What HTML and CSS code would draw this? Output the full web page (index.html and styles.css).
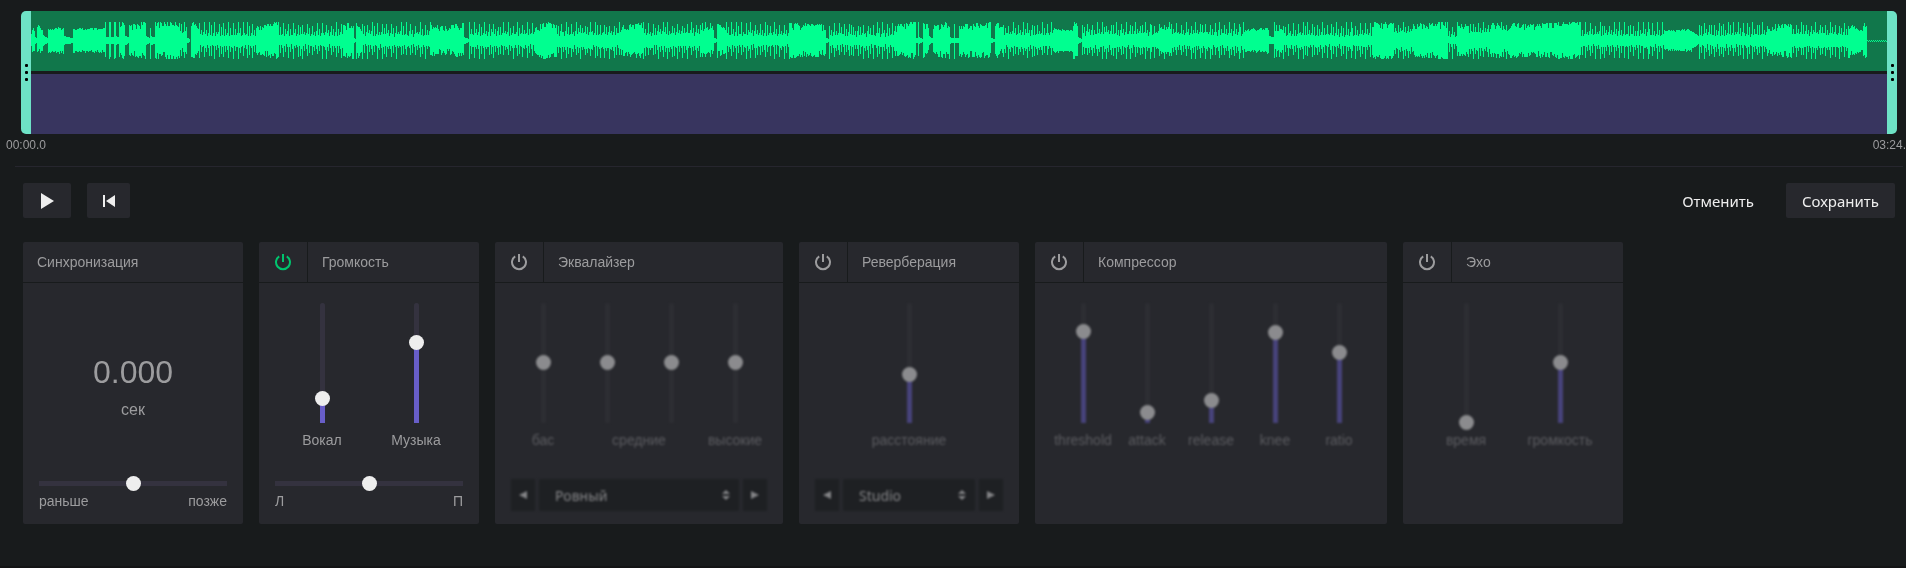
FILE: index.html
```html
<!DOCTYPE html>
<html lang="ru">
<head>
    <meta charset="UTF-8">
    <meta name="viewport" content="width=device-width, initial-scale=1.0">
    <title>Редактор записи</title>
    <link rel="stylesheet" href="styles.css">
</head>
<body>
    <svg class="sprite" aria-hidden="true">
        <symbol id="icon-power" viewBox="0 0 18 18">
            <path d="M5.2 3.3A7 7 0 1 0 12.8 3.3" fill="none" stroke="currentColor" stroke-width="2"/>
            <path d="M9 1V9" fill="none" stroke="currentColor" stroke-width="2"/>
        </symbol>
        <symbol id="icon-prev" viewBox="0 0 8 8">
            <path d="M8 0V8L0 4Z" fill="currentColor"/>
        </symbol>
        <symbol id="icon-next" viewBox="0 0 8 8">
            <path d="M0 0V8L8 4Z" fill="currentColor"/>
        </symbol>
        <symbol id="icon-sort" viewBox="0 0 8 10">
            <path d="M4 0L8 4H0ZM4 10L0 6H8Z" fill="currentColor"/>
        </symbol>
    </svg>

    <main class="editor">
        <div class="timeline">
            <button class="handle handle-start" aria-label="Начало"><i></i><i></i><i></i></button>
            <div class="tracks">
                <canvas class="track track-voice" id="wave" width="1856" height="60"></canvas>
                <div class="track track-music"></div>
            </div>
            <button class="handle handle-end" aria-label="Конец"><i></i><i></i><i></i></button>
        </div>
        <div class="times">
            <span>00:00.0</span>
            <span>03:24.</span>
        </div>

        <div class="toolbar">
            <button class="btn btn-play" aria-label="Играть">
                <svg width="14" height="16" viewBox="0 0 14 16"><path d="M1 0L14 8L1 16Z" fill="currentColor"/></svg>
            </button>
            <button class="btn btn-rewind" aria-label="В начало">
                <svg width="12" height="12" viewBox="0 0 12 12"><path d="M0 0H2V12H0ZM12 0V12L3 6Z" fill="currentColor"/></svg>
            </button>
            <button class="btn btn-text btn-flat">Отменить</button>
            <button class="btn btn-text">Сохранить</button>
        </div>

        <div class="panels">
            <section class="panel">
                <header class="panel-head"><h2>Синхронизация</h2></header>
                <div class="panel-body">
                    <div class="sync">
                        <output class="sync-value" for="sync">0.000</output>
                        <span class="sync-unit">сек</span>
                    </div>
                    <div class="balance">
                        <input type="range" id="sync" aria-label="Синхронизация" min="-50" max="50" value="0">
                        <span>раньше</span>
                        <span>позже</span>
                    </div>
                </div>
            </section>

            <section class="panel">
                <header class="panel-head">
                    <button class="power power-on" aria-label="Громкость вкл."><svg><use href="#icon-power"/></svg></button>
                    <h2>Громкость</h2>
                </header>
                <div class="panel-body">
                    <div class="faders">
                        <div class="fader">
                            <div class="slot" style="--level: 20%"><input type="range" id="vocal" value="20"></div>
                            <label for="vocal">Вокал</label>
                        </div>
                        <div class="fader">
                            <div class="slot" style="--level: 67%"><input type="range" id="music" value="67"></div>
                            <label for="music">Музыка</label>
                        </div>
                    </div>
                    <div class="balance">
                        <input type="range" aria-label="Баланс" min="-50" max="50" value="0">
                        <span>Л</span>
                        <span>П</span>
                    </div>
                </div>
            </section>

            <section class="panel panel-off panel-4">
                <header class="panel-head">
                    <button class="power" aria-label="Эквалайзер вкл."><svg><use href="#icon-power"/></svg></button>
                    <h2>Эквалайзер</h2>
                </header>
                <div class="panel-body">
                    <div class="faders">
                        <div class="fader">
                            <div class="slot"><input type="range" id="bass" value="50"></div>
                            <label for="bass">бас</label>
                        </div>
                        <div class="fader fader-pair">
                            <div class="slot"><input type="range" id="mid" value="50"></div>
                            <div class="slot"><input type="range" aria-label="средние 2" value="50"></div>
                            <label for="mid">средние</label>
                        </div>
                        <div class="fader">
                            <div class="slot"><input type="range" id="treble" value="50"></div>
                            <label for="treble">высокие</label>
                        </div>
                    </div>
                    <div class="presets">
                        <button aria-label="Назад"><svg width="8" height="8"><use href="#icon-prev"/></svg></button>
                        <div class="preset">
                            <select aria-label="Пресет эквалайзера"><option>Ровный</option></select>
                            <svg width="8" height="10"><use href="#icon-sort"/></svg>
                        </div>
                        <button aria-label="Вперёд"><svg width="8" height="8"><use href="#icon-next"/></svg></button>
                    </div>
                </div>
            </section>

            <section class="panel panel-off">
                <header class="panel-head">
                    <button class="power" aria-label="Реверберация вкл."><svg><use href="#icon-power"/></svg></button>
                    <h2>Реверберация</h2>
                </header>
                <div class="panel-body">
                    <div class="faders">
                        <div class="fader">
                            <div class="slot" style="--level: 40%"><input type="range" id="distance" value="40"></div>
                            <label for="distance">расстояние</label>
                        </div>
                    </div>
                    <div class="presets">
                        <button aria-label="Назад"><svg width="8" height="8"><use href="#icon-prev"/></svg></button>
                        <div class="preset">
                            <select aria-label="Пресет реверберации"><option>Studio</option></select>
                            <svg width="8" height="10"><use href="#icon-sort"/></svg>
                        </div>
                        <button aria-label="Вперёд"><svg width="8" height="8"><use href="#icon-next"/></svg></button>
                    </div>
                </div>
            </section>

            <section class="panel panel-off panel-5">
                <header class="panel-head">
                    <button class="power" aria-label="Компрессор вкл."><svg><use href="#icon-power"/></svg></button>
                    <h2>Компрессор</h2>
                </header>
                <div class="panel-body">
                    <div class="faders">
                        <div class="fader">
                            <div class="slot" style="--level: 76%"><input type="range" id="threshold" value="76"></div>
                            <label for="threshold">threshold</label>
                        </div>
                        <div class="fader">
                            <div class="slot" style="--level: 8%"><input type="range" id="attack" value="8"></div>
                            <label for="attack">attack</label>
                        </div>
                        <div class="fader">
                            <div class="slot" style="--level: 18%"><input type="range" id="release" value="18"></div>
                            <label for="release">release</label>
                        </div>
                        <div class="fader">
                            <div class="slot" style="--level: 75%"><input type="range" id="knee" value="75"></div>
                            <label for="knee">knee</label>
                        </div>
                        <div class="fader">
                            <div class="slot" style="--level: 58%"><input type="range" id="ratio" value="58"></div>
                            <label for="ratio">ratio</label>
                        </div>
                    </div>
                </div>
            </section>

            <section class="panel panel-off">
                <header class="panel-head">
                    <button class="power" aria-label="Эхо вкл."><svg><use href="#icon-power"/></svg></button>
                    <h2>Эхо</h2>
                </header>
                <div class="panel-body">
                    <div class="faders">
                        <div class="fader">
                            <div class="slot" style="--level: 0%"><input type="range" id="echo-time" value="0"></div>
                            <label for="echo-time">время</label>
                        </div>
                        <div class="fader">
                            <div class="slot" style="--level: 50%"><input type="range" id="echo-volume" value="50"></div>
                            <label for="echo-volume">громкость</label>
                        </div>
                    </div>
                </div>
            </section>
        </div>
    </main>

    <script src="wave.js"></script>
</body>
</html>
```
FILE: styles.css
```css
* {
    box-sizing: border-box;
}
body {
    margin: 0;
    min-height: 100vh;
    background-color: #181b1c;
    border-bottom: 2px solid #131415;
    color: #9c9c9e;
    font-family: "Liberation Sans", Arial, sans-serif;
    font-size: 14px;
    line-height: 20px;
    overflow: hidden;
}
button {
    display: flex;
    align-items: center;
    justify-content: center;
    padding: 0;
    border: none;
    background: none;
    color: inherit;
    cursor: pointer;
}
.sprite {
    display: none;
}
.editor {
    padding-top: 11px;
}

/* timeline */
.timeline {
    display: flex;
    margin: 0 9px 0 21px;
}
.handle {
    flex: none;
    flex-direction: column;
    gap: 4px;
    width: 10px;
    background-color: #6ee2c6;
    cursor: ew-resize;
}
.handle i {
    width: 3px;
    height: 3px;
    border-radius: 1px;
    background-color: #000;
}
.handle-start {
    border-radius: 5px 0 0 5px;
}
.handle-end {
    border-radius: 0 5px 5px 0;
}
.tracks {
    flex: 1;
    min-width: 0;
    display: flex;
    flex-direction: column;
    gap: 3px;
}
.track {
    display: block;
    width: 100%;
    height: 60px;
}
.track-voice {
    background-color: #11774b;
}
.track-music {
    background-color: #38355f;
}
.times {
    display: flex;
    justify-content: space-between;
    padding: 1px 0 0 6px;
    font-size: 12px;
}

/* toolbar */
.toolbar {
    display: flex;
    gap: 16px;
    margin: 11px 3px 0 15px;
    padding: 16px 8px 24px;
    border-top: 1px solid #26262e;
}
.btn {
    height: 35px;
    border-radius: 2px;
    background-color: #27282d;
    color: #eee;
}
.btn-play {
    width: 48px;
}
.btn-rewind {
    width: 43px;
}
.btn-text {
    padding: 0 16px;
    font-family: "Noto Sans", sans-serif;
    font-size: 15px;
}
.btn-flat {
    margin-left: auto;
    background: none;
}

/* effect panels */
.panels {
    display: flex;
    gap: 16px;
    padding: 0 23px;
}
.panel {
    display: flex;
    flex-direction: column;
    width: 220px;
    border-radius: 2px;
    background-color: #27282d;
}
.panel-4 {
    width: 288px;
}
.panel-5 {
    width: 352px;
}
.panel-head {
    display: flex;
    height: 41px;
    border-bottom: 1px solid #181b1c;
}
.panel-head h2 {
    margin: 0;
    padding: 10px 14px;
    font-size: 14px;
    font-weight: normal;
}
.power {
    width: 49px;
    border-right: 1px solid #181b1c;
}
.power svg {
    width: 18px;
    height: 18px;
}
.power-on {
    color: #00c46e;
}
.panel-body {
    flex: 1;
    display: flex;
    flex-direction: column;
    justify-content: space-between;
    min-height: 241px;
    padding: 12px 16px 13px;
}
.panel-off .panel-body {
    filter: blur(1px);
    opacity: 0.5;
}

.sync {
    display: flex;
    flex-direction: column;
    align-items: center;
    gap: 8px;
    padding-top: 57px;
}
.sync-value {
    font-size: 32px;
    line-height: 40px;
}
.sync-unit {
    font-size: 16px;
}

/* sliders */
input[type="range"] {
    appearance: none;
    width: 100%;
    height: 15px;
    margin: 0;
    background: none;
    cursor: pointer;
}
input[type="range"]::-webkit-slider-thumb {
    appearance: none;
    width: 15px;
    height: 15px;
    border-radius: 50%;
    background-color: #eee;
}
.balance {
    display: flex;
    flex-wrap: wrap;
    justify-content: space-between;
}
.balance input {
    background: linear-gradient(#34323f, #34323f) center / 100% 5px no-repeat;
}
.faders {
    display: flex;
}
.fader {
    flex: 1;
    display: grid;
    justify-items: center;
}
.fader-pair {
    flex: 2;
    grid-template-columns: 1fr 1fr;
}
.fader-pair label {
    grid-column: 1 / -1;
}
.slot {
    --level: 0%;
    --rail: #34323f;
    display: grid;
    place-items: center;
}
.slot::before {
    content: "";
    grid-area: 1 / 1;
    width: 5px;
    height: 120px;
    border-radius: 3px 3px 0 0;
    background: linear-gradient(to top, #685ec8 var(--level), var(--rail) var(--level));
}
.slot input {
    grid-area: 1 / 1;
    width: 15px;
    height: 135px;
    writing-mode: vertical-lr;
    direction: rtl;
}
.panel-off .slot {
    --rail: #333439;
}
.panel-off label {
    color: #8e8e92;
}

/* presets */
.presets {
    display: flex;
    gap: 4px;
}
.presets button {
    width: 24px;
    height: 32px;
    background-color: #16191a;
    color: #ddd;
}
.preset {
    flex: 1;
    display: grid;
    align-items: center;
}
.preset select {
    grid-area: 1 / 1;
    appearance: none;
    width: 100%;
    height: 32px;
    padding: 0 16px;
    border: none;
    border-radius: 2px;
    background-color: #16191a;
    color: #ddd;
    font-family: "Noto Sans", sans-serif;
    font-size: 14px;
}
.preset svg {
    grid-area: 1 / 1;
    justify-self: end;
    margin-right: 9px;
    color: #ddd;
    pointer-events: none;
}
```
FILE: wave.js
```js
// [start, end, kind, from, to]
// solid: filled block, amplitude goes from -> to
// beat:  separate hits over a low floor
const segments = [
    [0, 1, 'solid', 5, 5], [1, 4, 'solid', 12, 8], [4, 6, 'solid', 2, 1],
    [6, 12, 'solid', 15, 10], [12, 17, 'solid', 4, 1], [17, 33, 'solid', 11, 12],
    [33, 42, 'solid', 3, 1], [42, 74, 'solid', 11, 11], [74, 75, 'solid', 18, 18],
    [75, 78, 'solid', 2, 2], [78, 80, 'solid', 18, 18], [80, 83, 'solid', 2, 2],
    [83, 85, 'solid', 18, 16], [85, 88, 'solid', 3, 2], [88, 94, 'solid', 18, 18],
    [94, 98, 'solid', 4, 1], [98, 115, 'solid', 14, 18], [115, 119, 'solid', 3, 1],
    [119, 120, 'solid', 18, 18], [120, 124, 'solid', 3, 2], [124, 148, 'solid', 17, 18],
    [148, 156, 'beat', 9, 18], [156, 159, 'solid', 1, 0], [160, 168, 'solid', 19, 11],
    [168, 225, 'beat', 5, 18], [225, 247, 'solid', 13, 18], [247, 312, 'beat', 5, 18],
    [312, 323, 'solid', 15, 18], [323, 325, 'solid', 1, 0], [325, 331, 'solid', 17, 13],
    [331, 400, 'beat', 5, 18], [400, 420, 'solid', 14, 13], [420, 433, 'solid', 15, 16],
    [433, 438, 'solid', 2, 0], [438, 504, 'beat', 5, 18], [504, 511, 'solid', 12, 17],
    [511, 525, 'solid', 18, 15], [525, 590, 'beat', 6, 18], [590, 612, 'solid', 14, 17],
    [612, 669, 'beat', 6, 18], [669, 683, 'beat', 11, 18], [683, 686, 'solid', 1, 0],
    [686, 695, 'solid', 16, 11], [695, 759, 'beat', 5, 18], [759, 795, 'solid', 16, 15],
    [795, 798, 'solid', 1, 0], [798, 864, 'beat', 5, 18], [864, 885, 'solid', 14, 18],
    [885, 887, 'solid', 1, 1], [887, 888, 'solid', 17, 17], [888, 892, 'solid', 2, 0],
    [892, 898, 'solid', 17, 14], [898, 902, 'solid', 3, 0], [902, 919, 'solid', 14, 18],
    [919, 923, 'solid', 2, 1], [923, 924, 'solid', 18, 18], [924, 928, 'solid', 1, 1],
    [928, 960, 'solid', 15, 17], [960, 964, 'solid', 1, 0], [964, 972, 'solid', 18, 12],
    [972, 1022, 'beat', 6, 18], [1022, 1042, 'solid', 11, 10], [1042, 1047, 'solid', 18, 14],
    [1047, 1051, 'solid', 2, 0], [1051, 1128, 'beat', 6, 18], [1128, 1140, 'beat', 11, 18],
    [1140, 1214, 'beat', 6, 18], [1214, 1238, 'solid', 10, 12], [1238, 1243, 'solid', 3, 2],
    [1243, 1252, 'beat', 10, 17], [1252, 1342, 'beat', 5, 18], [1342, 1362, 'solid', 17, 17],
    [1362, 1382, 'beat', 8, 18], [1382, 1416, 'solid', 15, 18], [1416, 1427, 'beat', 3, 18],
    [1427, 1437, 'solid', 14, 16], [1437, 1459, 'beat', 8, 18], [1459, 1470, 'solid', 16, 16],
    [1470, 1477, 'beat', 10, 18], [1477, 1500, 'solid', 16, 15], [1500, 1549, 'solid', 15, 18],
    [1549, 1634, 'beat', 5, 18], [1634, 1661, 'solid', 9, 10], [1661, 1668, 'solid', 8, 2],
    [1668, 1738, 'beat', 5, 18], [1738, 1760, 'solid', 14, 16], [1760, 1817, 'beat', 6, 18],
    [1817, 1832, 'solid', 16, 9], [1832, 1836, 'solid', 18, 15], [1836, 1856, 'quiet', 1, 1]
];

const canvas = document.getElementById('wave');
const ctx = canvas.getContext('2d');
const middle = 29;
const hits = [1, 0.05, 0.65, 0, 0.15, 1, 0.1, 0.4, 0, 0.25];

function noise(n) {
    const v = Math.sin(n * 12.9898) * 43758.5453;
    return v - Math.floor(v);
}

function amplitude(x, side, [start, end, kind, from, to]) {
    const n = noise(x + side);
    if (kind === 'beat') {
        const step = x - start;
        const hit = hits[(step + Math.floor(step / 23)) % hits.length];
        const level = from + (to - from) * hit * (0.8 + 0.25 * n) + n * 3 - 2;
        return Math.min(18, level);
    }
    const level = from + (to - from) * (x - start) / (end - start);
    const dip = level > 13 ? n * n * 7 : n * level * 0.25;
    return Math.min(18, level + 1 - dip);
}

ctx.fillStyle = '#00ff90';
segments.forEach(segment => {
    for (let x = segment[0]; x < segment[1]; x++) {
        if (segment[2] === 'quiet') {
            ctx.fillRect(x, middle + x % 2, 1, 1);
            continue;
        }
        const top = Math.round(amplitude(x, 0, segment));
        const bottom = Math.round(amplitude(x, 500, segment));
        ctx.fillRect(x, middle - top, 1, top + bottom + 1);
    }
});
```
